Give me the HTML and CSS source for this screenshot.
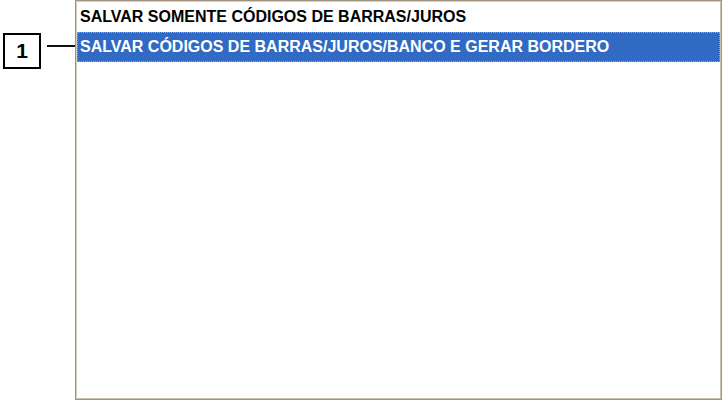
FILE: index.html
```html
<!DOCTYPE html>
<html>
<head>
<meta charset="utf-8">
<link rel="stylesheet" href="styles.css">
</head>
<body>
<div class="page">
  <div class="callout">
    <div class="badge">1</div>
    <div class="leader"></div>
  </div>
  <div class="listbox">
    <div class="row">SALVAR SOMENTE CÓDIGOS DE BARRAS/JUROS</div>
    <div class="row selected">SALVAR CÓDIGOS DE BARRAS/JUROS/BANCO E GERAR BORDERO</div>
  </div>
</div>
</body>
</html>
```

FILE: styles.css
```css
html, body {
  margin: 0;
  padding: 0;
  background: #ffffff;
}
.page {
  display: flex;
  width: 723px;
  height: 401px;
  font-family: "Liberation Sans", Arial, sans-serif;
}
.callout {
  width: 75px;
  flex: none;
  display: flex;
  align-items: flex-start;
  padding-top: 33px;
  box-sizing: border-box;
}
.badge {
  margin-left: 3px;
  width: 38px;
  height: 36px;
  box-sizing: border-box;
  border: 2px solid #000;
  display: flex;
  align-items: center;
  justify-content: center;
  font-weight: bold;
  font-size: 21px;
  color: #000;
}
.leader {
  margin-left: 6px;
  margin-top: 12px;
  flex: 1;
  height: 2px;
  background: #111;
}
.listbox {
  width: 647px;
  height: 400px;
  box-sizing: border-box;
  border: 1px solid #a39480;
  box-shadow: inset 1px 1px 0 #d6cec2, inset -1px -1px 0 #c9bfb1;
  padding: 1px;
  background: #fefefe;
}
.row {
  height: 30px;
  box-sizing: border-box;
  padding-left: 3px;
  display: flex;
  align-items: center;
  font-weight: bold;
  font-size: 16px;
  color: #000;
  white-space: nowrap;
}
.row.selected {
  background: #316ac5;
  color: #fff;
  border: 1px dotted #c9a25c;
  padding-left: 2px;
}
```
